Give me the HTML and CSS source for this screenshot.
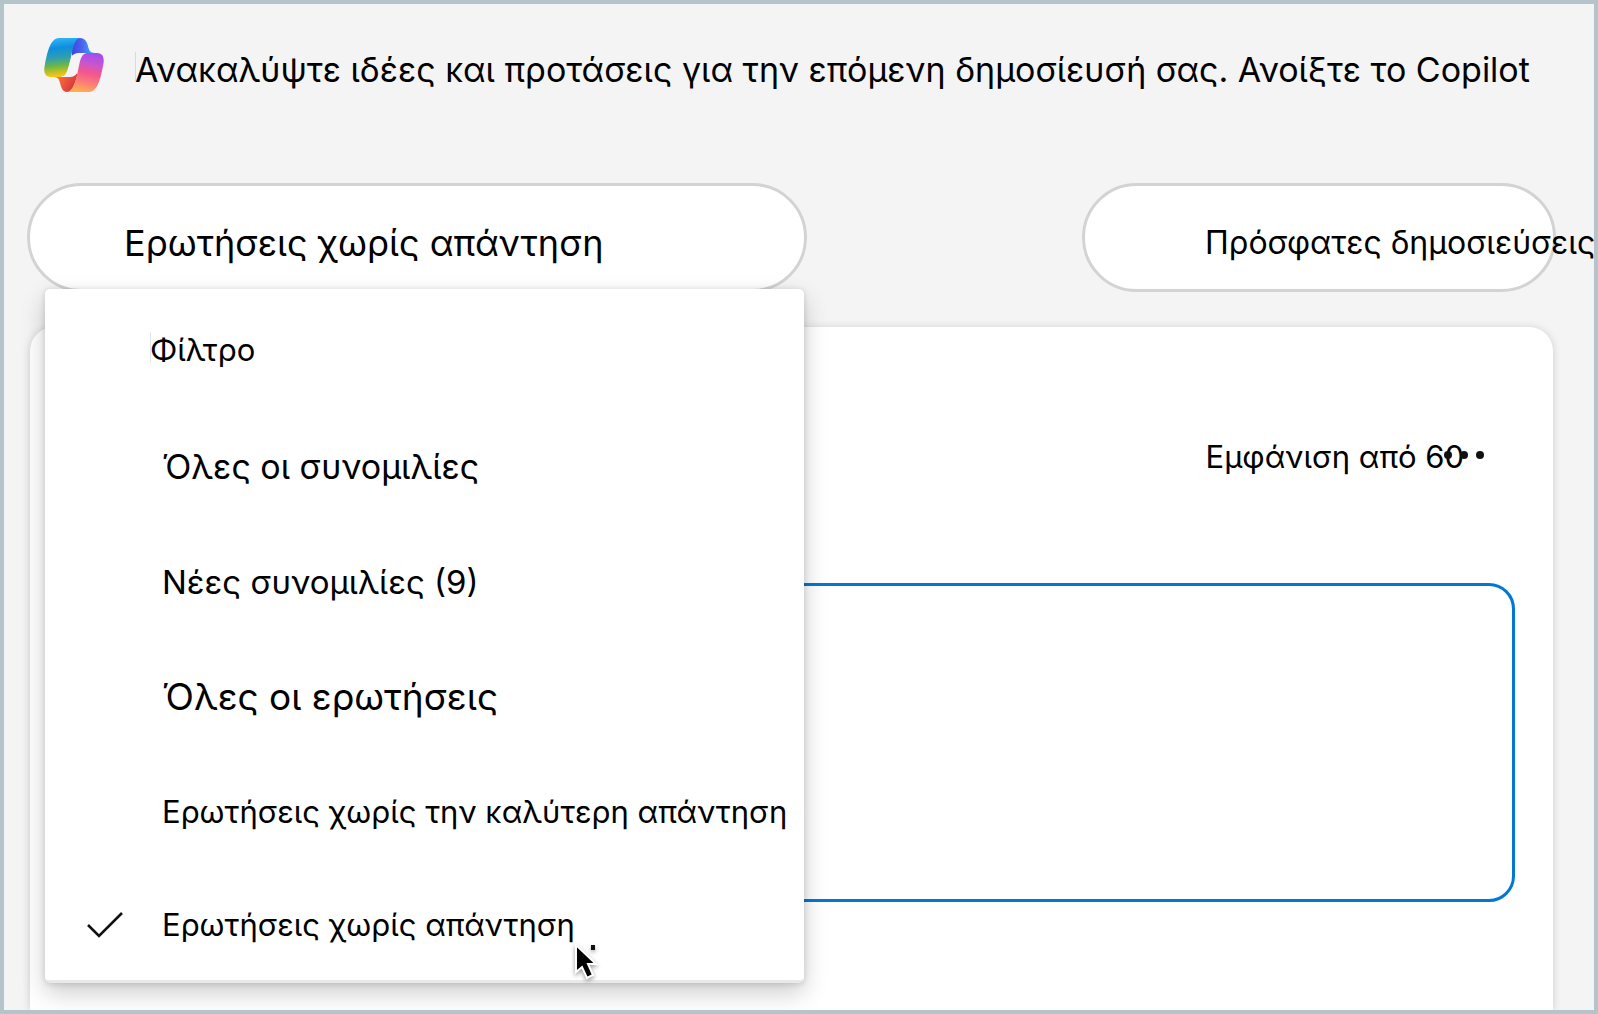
FILE: index.html
```html
<!DOCTYPE html>
<html lang="el">
<head>
<meta charset="utf-8">
<meta name="viewport" content="width=device-width, initial-scale=1">
<title>Συνομιλίες</title>
<link rel="stylesheet" href="styles.css">
</head>
<body>
<header class="banner">
  <svg class="logo" viewBox="0 0 60 54" aria-hidden="true">
    <defs>
      <linearGradient id="blue" x1=".4" y1="0" x2=".5" y2="1"><stop offset="0" stop-color="#2fb4f4"/><stop offset=".25" stop-color="#0f8ee0"/><stop offset=".5" stop-color="#2f9fae"/><stop offset=".7" stop-color="#6cb648"/><stop offset=".95" stop-color="#f4c613"/></linearGradient>
      <linearGradient id="fold" x1="0" y1="0" x2="1" y2="0"><stop offset=".1" stop-color="#4448e6"/><stop offset=".45" stop-color="#4a63ee"/><stop offset="1" stop-color="#35c2f8"/></linearGradient>
      <linearGradient id="pink" x1=".6" y1="0" x2=".4" y2="1"><stop offset="0" stop-color="#a34cf0"/><stop offset=".25" stop-color="#c755cf"/><stop offset=".5" stop-color="#f3578d"/><stop offset=".75" stop-color="#fb7d78"/><stop offset="1" stop-color="#ffb04f"/></linearGradient>
      <linearGradient id="red" x1="0" y1="0" x2="1" y2=".4"><stop offset="0" stop-color="#fba03d"/><stop offset=".4" stop-color="#f9633c"/><stop offset="1" stop-color="#d33a3c"/></linearGradient>
    </defs>
    <path fill="url(#fold)" d="M27 0H36C41 0 43 4 44 8C45 12 46 15 51 15H37C32 15 30 16 28 18Z"/>
    <path fill="url(#red)" d="M33 38C31 46 28 54 23 54C18 54 17 48 16 45C15 41 14 39 9 39H24C28 39 30 38 33 35Z"/>
    <path fill="url(#blue)" d="M15 0H36C31 0 29 9 27 19L24 31C22 37 20 39 15 39H7C1 39-1 34 1 26C3 16 6 0 15 0Z"/>
    <path fill="#f4f4f4" d="M28 18C30 16 32 15 37 15H44C40 15 38 17 36 23L33 35C31 38 29 39 24 39H15C20 39 22 37 24 31Z"/>
    <path fill="url(#pink)" d="M45 54H23C28 54 31 46 33 37L36 23C38 17 40 15 44 15H53C59 15 61 20 59 28C57 38 54 54 45 54Z"/>
  </svg>
  <p class="banner-text">Ανακαλύψτε ιδέες και προτάσεις για την επόμενη δημοσίευσή σας. Ανοίξτε το Copilot</p>
</header>
<main class="feed">
  <div class="toolbar">
    <div class="filter">
      <button class="pill pill-filter" type="button" aria-haspopup="menu" aria-expanded="true">Ερωτήσεις χωρίς απάντηση</button>
      <div class="menu" role="menu" aria-labelledby="menu-title">
        <div class="menu-title"><span id="menu-title">Φίλτρο</span></div>
        <button class="item item-medium" type="button" role="menuitemradio" aria-checked="false">Όλες οι συνομιλίες</button>
        <button class="item item-new" type="button" role="menuitemradio" aria-checked="false">Νέες συνομιλίες (9)</button>
        <button class="item item-large" type="button" role="menuitemradio" aria-checked="false">Όλες οι ερωτήσεις</button>
        <button class="item" type="button" role="menuitemradio" aria-checked="false">Ερωτήσεις χωρίς την καλύτερη απάντηση</button>
        <button class="item" type="button" role="menuitemradio" aria-checked="true">
          <svg class="check" viewBox="0 0 36 26" aria-hidden="true"><path d="M1 13L12 24L35 1" fill="none" stroke="#111" stroke-width="2.6"/></svg>Ερωτήσεις χωρίς απάντηση
          <svg class="cursor" viewBox="0 0 26 36" aria-hidden="true"><path d="M2 1V28L8 23L13 34L19 31L14 20H22Z" fill="#000" stroke="#fff" stroke-width="2"/><path d="M17 1h4v5h-4z" fill="#111"/></svg>
        </button>
      </div>
    </div>
    <button class="pill pill-sort" type="button">Πρόσφατες δημοσιεύσεις</button>
  </div>
  <section class="panel">
    <div class="panel-head">
      <span>Εμφάνιση από 60</span>
      <button class="more" type="button" aria-label="Περισσότερα"><svg viewBox="0 0 40 8" aria-hidden="true"><circle cx="4" cy="4" r="4"/><circle cx="20" cy="4" r="4"/><circle cx="36" cy="4" r="4"/></svg></button>
    </div>
    <article class="post"></article>
  </section>
</main>
</body>
</html>
```
FILE: styles.css
```css
* { box-sizing: border-box; }
html { overflow-x: hidden; }
body {
  margin: 0;
  min-height: 100vh;
  display: flex;
  flex-direction: column;
  border: 4px solid #b5c3cb;
  background: #f4f4f4;
  color: #000;
  font: 31px/40px Inter, "Liberation Sans", sans-serif;
}
button { font: inherit; color: inherit; border: 0; background: none; text-align: left; white-space: nowrap; }
.banner { display: flex; gap: 31px; padding: 34px 40px 0; }
.logo { width: 60px; height: 54px; flex: none; }
.banner-text {
  margin: 12px 0 0;
  height: 40px;
  font-size: 34px;
  white-space: nowrap;
}
.banner-text::before, .menu-title span::before {
  content: "";
  position: absolute;
  width: 1px;
  height: 30px;
  margin-top: 2px;
  background: #dadada;
}
.feed { flex: 1; display: flex; flex-direction: column; padding: 91px 41px 0 23px; }
.toolbar { display: flex; justify-content: space-between; margin-right: -3px; }
.filter { position: relative; width: 51%; }
.pill {
  height: 109px;
  padding: 10px 0 0;
  border: 3px solid #d3d3d3;
  border-radius: 55px;
  background: #fff;
}
.pill-filter { width: 100%; padding-left: 94px; font-size: 36px; }
.pill-sort { width: 31%; padding-left: 120px; font-size: 32px; }
.menu {
  position: absolute;
  z-index: 1;
  top: 106px;
  left: 18px;
  right: 3px;
  padding-top: 4px;
  border-bottom: 3px solid #e9e9e9;
  border-radius: 5px;
  background: #fff;
  box-shadow: 0 10px 24px rgba(0, 0, 0, .2), 0 1px 6px rgba(0, 0, 0, .14);
}
.menu-title { padding: 37px 0 39px 105px; }
.menu-title span::before { background: #dfe3f4; }
.item { position: relative; display: block; width: 100%; height: 115px; padding: 0 0 0 117px; }
.item:last-child { height: 111px; }
.item-new { font-size: 33px; }
.item-medium { font-size: 34px; }
.item-large { font-size: 37px; }
.check { position: absolute; left: 42px; top: 43px; width: 36px; height: 26px; }
.cursor { position: absolute; left: 529px; top: 75px; width: 26px; height: 36px; filter: drop-shadow(0 2px 2px rgba(0, 0, 0, .4)); }
.panel {
  flex: 1;
  margin: 35px 0 0 3px;
  padding: 110px 38px 80px 40px;
  border-radius: 24px 24px 0 0;
  background: #fff;
  box-shadow: 0 1px 8px rgba(0, 0, 0, .16);
}
.panel-head { position: relative; display: flex; justify-content: flex-end; padding-right: 51px; }
.more { position: absolute; right: 31px; top: 10px; display: flex; padding: 4px 0; }
.more svg { width: 40px; height: 8px; fill: #111; }
.post { min-height: 319px; margin-top: 106px; border: 3px solid #0078d4; border-radius: 26px; }
```
